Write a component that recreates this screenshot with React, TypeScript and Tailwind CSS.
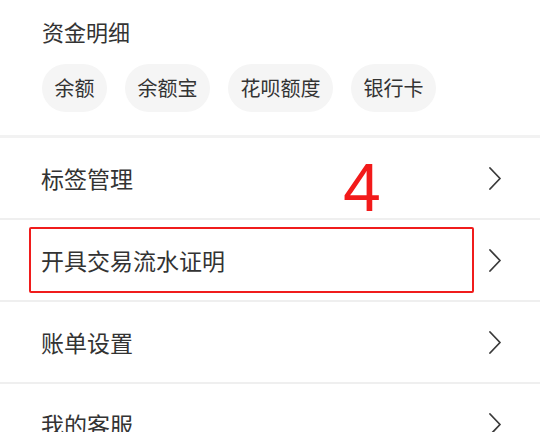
const pills = ['余额', '余额宝', '花呗额度', '银行卡']

const rows = ['标签管理', '开具交易流水证明', '账单设置', '我的客服']

function Chevron() {
  return (
    <svg width="14" height="24" viewBox="0 0 14 24" fill="none" className="shrink-0">
      <path d="M2 2l10 10.5L2 23" stroke="#3a3a3a" strokeWidth="1.8" strokeLinecap="round" strokeLinejoin="round" />
    </svg>
  )
}

export default function App() {
  return (
    <div
      className="relative w-[540px] h-[432px] overflow-hidden bg-white text-[#333]"
      style={{ fontFamily: '"Noto Sans CJK SC", "Noto Sans", sans-serif' }}
    >
      {/* funds detail */}
      <div className="pl-[42px] pt-[15px] pb-[23px]">
        <div className="text-[22px] leading-[33px]">资金明细</div>
        <div className="flex gap-[18px] mt-[16px]">
          {pills.map((p) => (
            <div
              key={p}
              className="h-[48px] px-[12.5px] rounded-full bg-[#f5f5f5] flex items-center text-[20px] text-[#333]"
            >
              {p}
            </div>
          ))}
        </div>
      </div>
      <div className="h-[3px] bg-[#f2f2f2]" />

      {rows.map((r, i) => (
        <div
          key={r}
          className="relative h-[82px] border-b-2 border-[#efefef] flex items-center justify-between pl-[41px] pr-[38px]"
        >
          <span className="text-[23px]">{r}</span>
          <Chevron />
          {i === 1 && (
            <div className="absolute left-[29px] top-[7px] w-[445px] h-[66px] border-2 border-[#f01c1c] rounded-[2px]" />
          )}
        </div>
      ))}

      {/* annotation number */}
      <div
        className="absolute left-[343px] top-[153px] text-[68px] leading-none text-[#f21a1a]"
        style={{ fontFamily: '"Liberation Sans", Arial, sans-serif' }}
      >
        4
      </div>
    </div>
  )
}
